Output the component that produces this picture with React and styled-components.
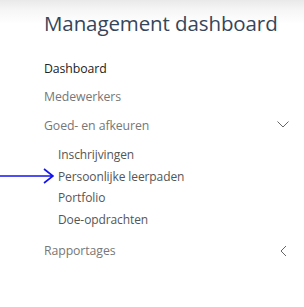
import styled, { createGlobalStyle } from 'styled-components';

const Global = createGlobalStyle`
  html, body { margin: 0; padding: 0; background: #fff; }
  body { font-family: "Open Sans", "Noto Sans", sans-serif; }
`;

const Panel = styled.div`
  width: 304px;
  height: 307px;
  overflow: hidden;
  background: linear-gradient(to bottom, #e9e9e9 0px, #f6f6f6 10px, #fff 24px);
  padding: 0 0 0 44px;
  box-sizing: border-box;
  position: relative;
`;

const Title = styled.h1`
  margin: 0;
  padding-top: 8px;
  font-weight: 400;
  font-size: 20.5px;
  line-height: 30px;
  color: #36465a;
  white-space: nowrap;
  letter-spacing: -0.1px;
`;

const Menu = styled.ul`
  list-style: none;
  margin: 16px 0 0;
  padding: 0 14px 0 0;
`;

const Item = styled.li`
  display: flex;
  align-items: center;
  justify-content: space-between;
  height: 28.5px;
  font-size: 12.3px;
  letter-spacing: -0.1px;
  color: ${p => (p.$active ? '#222' : '#777')};
`;

const SubMenu = styled.ul`
  list-style: none;
  margin: 4px 0 6px;
  padding: 0 0 0 14px;
`;

const SubItem = styled.li`
  height: 21.8px;
  display: flex;
  align-items: center;
  font-size: 12px;
  letter-spacing: -0.1px;
  color: #555;
  position: relative;
`;

const Pointer = styled.svg`
  position: absolute;
  left: -58px;
  top: 3px;
`;

const ChevronBox = styled.svg`
  margin-right: ${p => (p.$dir === 'down' ? '1px' : '0')};
`;

const Chevron = ({ dir }) => (
  <ChevronBox $dir={dir} width="12" height="12" viewBox="0 0 12 12">
    <path
      d={dir === 'down' ? 'M0.5 2.5 L6 8 L11.5 2.5' : 'M8 1 L3 6 L8 11'}
      fill="none"
      stroke="#666"
      strokeWidth="1"
    />
  </ChevronBox>
);

const subItems = ['Inschrijvingen', 'Persoonlijke leerpaden', 'Portfolio', 'Doe-opdrachten'];

export default function App() {
  return (
    <>
      <Global />
      <Panel>
        <Title>Management dashboard</Title>
        <Menu>
          <Item $active>Dashboard</Item>
          <Item>Medewerkers</Item>
          <Item>
            Goed- en afkeuren
            <Chevron dir="down" />
          </Item>
          <SubMenu>
            {subItems.map(s => (
              <SubItem key={s}>
                {s === 'Persoonlijke leerpaden' && (
                  <Pointer width="56" height="16" viewBox="0 0 56 16">
                    <path d="M0 8 H53 M44 1 L53 8 L44 15" fill="none" stroke="#1414f0" strokeWidth="1.6" />
                  </Pointer>
                )}
                {s}
              </SubItem>
            ))}
          </SubMenu>
          <Item>
            Rapportages
            <Chevron dir="left" />
          </Item>
        </Menu>
      </Panel>
    </>
  );
}
